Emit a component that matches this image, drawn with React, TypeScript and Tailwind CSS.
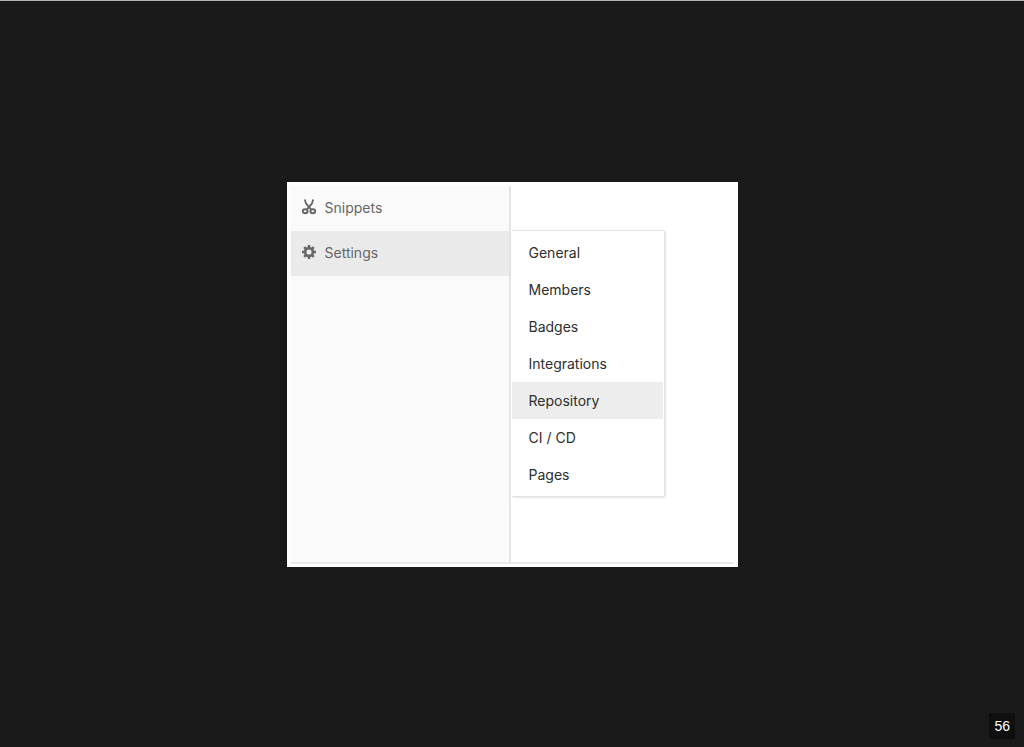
const settingsLinks = ["General", "Members", "Badges", "Integrations", "Repository", "CI / CD", "Pages"];

const activeLink = "Repository";

function ScissorsIcon() {
  return (
    <svg viewBox="0 0 16 16" className="size-4 shrink-0" fill="none" stroke="currentColor" aria-hidden="true">
      <path d="M3.8 0.6 L5 4.4 L10.2 10.6 M12.2 0.6 L11 4.4 L5.8 10.6" strokeWidth="1.8" strokeLinejoin="round" />
      <ellipse cx="4.2" cy="12.3" rx="2.4" ry="2" strokeWidth="1.9" />
      <ellipse cx="11.8" cy="12.3" rx="2.4" ry="2" strokeWidth="1.9" />
    </svg>
  );
}

function GearIcon() {
  return (
    <svg viewBox="0 0 16 16" className="size-4 shrink-0" fill="none" stroke="currentColor" aria-hidden="true">
      <circle cx="8" cy="8" r="3.9" strokeWidth="2.6" />
      <path
        d="M8 1v3 M8 12v3 M1 8h3 M12 8h3 M3.2 3.2l2 2 M10.8 10.8l2 2 M12.8 3.2l-2 2 M5.2 10.8l-2 2"
        strokeWidth="2.4"
      />
    </svg>
  );
}

function SettingsMenu() {
  return (
    <ul className="absolute -top-px left-full ml-[3px] w-[153px] rounded-r-xs border border-l-0 border-[#e3e3e3] bg-white py-[3px] pr-px shadow-[1px_1px_2px_rgba(0,0,0,0.1)]">
      {settingsLinks.map((label) => (
        <li key={label}>
          <a
            href="#"
            className={`block py-2 pl-[17px] text-[14px] leading-[21px] text-[#2e2e2e] ${
              label === activeLink ? "bg-[#ededed]" : ""
            }`}
          >
            {label}
          </a>
        </li>
      ))}
    </ul>
  );
}

function Sidebar() {
  return (
    <nav className="w-[220px] shrink-0 border-r-2 border-[#e4e4e4] bg-[#fafafa] text-[14px] text-[#666666]">
      <ul>
        <li>
          <a href="#" className="flex h-[45px] items-center gap-2 pb-0.5 pl-[10px]">
            <ScissorsIcon />
            Snippets
          </a>
        </li>
        <li className="relative">
          <a href="#" className="flex h-[45px] items-center gap-2 bg-[#eaeaea] pb-0.5 pl-[10px]">
            <GearIcon />
            Settings
          </a>
          <SettingsMenu />
        </li>
      </ul>
    </nav>
  );
}

export default function App() {
  return (
    <main className="relative flex min-h-screen items-center justify-center border-t border-[#b0b3b0] bg-[#1a1a1a] font-['Inter',sans-serif]">
      <div className="w-[451px] bg-white p-1 pb-[3px]">
        <div className="flex min-h-[378px] border-b-2 border-[#e9e9e9]">
          <Sidebar />
        </div>
      </div>

      {/* slide number */}
      <span className="absolute bottom-2 right-[9px] bg-[#0f0f0f] px-[5px] py-[3px] font-['Liberation_Sans',sans-serif] text-[14px] leading-5 text-white">
        56
      </span>
    </main>
  );
}
